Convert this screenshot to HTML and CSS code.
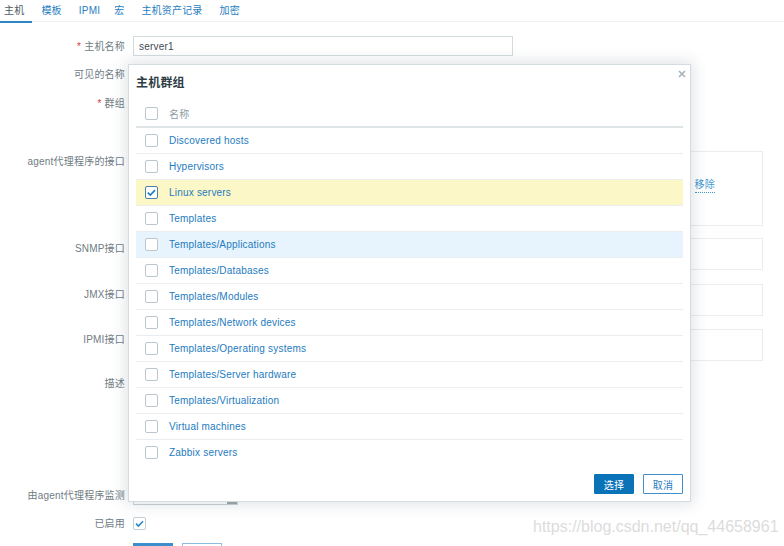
FILE: index.html
```html
<!DOCTYPE html>
<html lang="zh">
<head>
<meta charset="utf-8">
<title>主机</title>
<link rel="stylesheet" href="styles.css">
</head>
<body>
<nav class="tabs">
  <span class="tab active">主机</span>
  <span class="tab">模板</span>
  <span class="tab tab-narrow">IPMI</span>
  <span class="tab">宏</span>
  <span class="tab">主机资产记录</span>
  <span class="tab">加密</span>
</nav>

<form class="form">
  <div class="row r1">
    <label class="lbl"><span class="req">*</span>主机名称</label>
    <div class="input wide">server1</div>
  </div>
  <div class="row r2">
    <label class="lbl">可见的名称</label>
    <div class="input wide"></div>
  </div>
  <div class="row r3">
    <label class="lbl"><span class="req">*</span>群组</label>
    <div class="multi"></div>
  </div>
  <div class="row r4">
    <label class="lbl">agent代理程序的接口</label>
    <div class="ibox agent"><span class="remove">移除</span></div>
  </div>
  <div class="row r5">
    <label class="lbl">SNMP接口</label>
    <div class="ibox small"></div>
  </div>
  <div class="row r6">
    <label class="lbl">JMX接口</label>
    <div class="ibox small"></div>
  </div>
  <div class="row r7">
    <label class="lbl">IPMI接口</label>
    <div class="ibox small"></div>
  </div>
  <div class="row r8">
    <label class="lbl">描述</label>
    <div class="textarea"></div>
  </div>
  <div class="row r9">
    <label class="lbl">由agent代理程序监测</label>
    <div class="select"><span class="arrow"></span></div>
  </div>
  <div class="row r10">
    <label class="lbl">已启用</label>
    <div class="field-cb"><span class="cb cb-light"><svg viewBox="0 0 13 13" width="13" height="13"><polyline points="3,6.6 5.4,9 10,4.2" fill="none" stroke="#2a86c9" stroke-width="1.6"/></svg></span></div>
  </div>
  <div class="row r11">
    <span></span>
    <div class="btns"><span class="fbtn primary"></span><span class="fbtn ghost"></span></div>
  </div>
</form>

<div class="modal">
  <span class="close"><svg viewBox="0 0 8 8" width="8" height="8"><path d="M1 1L7 7M7 1L1 7" stroke="#a7b3b9" stroke-width="1.6" fill="none"/></svg></span>
  <h2 class="mtitle">主机群组</h2>
  <div class="table">
    <div class="trow head"><span class="cell-cb"><span class="cb"></span></span><span class="hname">名称</span></div>
    <div class="trow"><span class="cell-cb"><span class="cb"></span></span><a class="link">Discovered hosts</a></div>
    <div class="trow"><span class="cell-cb"><span class="cb"></span></span><a class="link">Hypervisors</a></div>
    <div class="trow selected"><span class="cell-cb"><span class="cb cb-on"><svg viewBox="0 0 13 13" width="13" height="13"><polyline points="2.8,6.6 5.3,9 10,4.2" fill="none" stroke="#1f7dc4" stroke-width="1.7"/></svg></span></span><a class="link">Linux servers</a></div>
    <div class="trow"><span class="cell-cb"><span class="cb"></span></span><a class="link">Templates</a></div>
    <div class="trow hover"><span class="cell-cb"><span class="cb"></span></span><a class="link">Templates/Applications</a></div>
    <div class="trow"><span class="cell-cb"><span class="cb"></span></span><a class="link">Templates/Databases</a></div>
    <div class="trow"><span class="cell-cb"><span class="cb"></span></span><a class="link">Templates/Modules</a></div>
    <div class="trow"><span class="cell-cb"><span class="cb"></span></span><a class="link">Templates/Network devices</a></div>
    <div class="trow"><span class="cell-cb"><span class="cb"></span></span><a class="link">Templates/Operating systems</a></div>
    <div class="trow"><span class="cell-cb"><span class="cb"></span></span><a class="link">Templates/Server hardware</a></div>
    <div class="trow"><span class="cell-cb"><span class="cb"></span></span><a class="link">Templates/Virtualization</a></div>
    <div class="trow"><span class="cell-cb"><span class="cb"></span></span><a class="link">Virtual machines</a></div>
    <div class="trow last"><span class="cell-cb"><span class="cb"></span></span><a class="link">Zabbix servers</a></div>
  </div>
  <div class="mfoot">
    <button type="button" class="btn btn-primary">选择</button>
    <button type="button" class="btn btn-alt">取消</button>
  </div>
</div>

<div class="watermark">https://blog.csdn.net/qq_44658961</div>
</body>
</html>
```

FILE: styles.css
```css
* { box-sizing: border-box; }

html, body {
  margin: 0;
  padding: 0;
  background: #ffffff;
}

body {
  width: 784px;
  height: 546px;
  overflow: hidden;
  position: relative;
  font-family: "Liberation Sans", Arial, "Noto Sans CJK SC", sans-serif;
  font-size: 10px;
  letter-spacing: 0.2px;
  color: #6f7c84;
}

/* tabs */
.tabs {
  display: flex;
  gap: 5px;
  height: 22px;
  border-bottom: 1px solid #eef1f3;
}
.tab {
  line-height: 21px;
  padding: 0 8px 0 4px;
  color: #1f7dc1;
  border-bottom: 2px solid transparent;
  height: 23px;
}
.tab.tab-narrow { padding-right: 5px; }
.tab.active {
  color: #4d5a62;
  border-bottom-color: #2d86c6;
}

/* form */
.form {
  padding-top: 14px;
}
.row {
  display: grid;
  grid-template-columns: 125px auto;
  column-gap: 8px;
  align-items: start;
}
.lbl {
  text-align: right;
  height: 20px;
  line-height: 20px;
  padding-top: 1px;
  white-space: nowrap;
  color: #6f7c84;
}
.req {
  color: #d83a3a;
  margin-right: 3px;
}
.r1 { margin-bottom: 8px; }
.r2 { margin-bottom: 9px; }
.r3 { margin-bottom: 8px; }
.r4 { margin-bottom: 12px; }
.r5 { margin-bottom: 14px; }
.r6 { margin-bottom: 13px; }
.r7 { margin-bottom: 12px; }
.r8 { margin-bottom: 8px; }
.r9 { margin-bottom: 8px; }
.r10 { margin-bottom: 10px; }

.input {
  height: 20px;
  border: 1px solid #d3dbdf;
  line-height: 18px;
  padding: 1px 5px 0;
  color: #3e4b53;
}
.input.wide { width: 380px; }
.multi { width: 380px; height: 50px; }
.ibox {
  width: 630px;
  border: 1px solid #e9edef;
  background: #ffffff;
}
.ibox.agent {
  height: 75px;
  display: flex;
  justify-content: flex-end;
  align-items: flex-start;
  padding: 26px 47px 0 0;
}
.ibox.small { height: 32px; }
.remove {
  color: #3f97d2;
  line-height: 14px;
  border-bottom: 1px dotted #3f97d2;
}
.textarea {
  width: 480px;
  height: 104px;
  border: 1px solid #d3dbdf;
}
.select {
  width: 105px;
  height: 20px;
  border: 1px solid #d3dbdf;
  border-bottom-color: #c9d1d5;
  display: flex;
  justify-content: flex-end;
  align-items: flex-end;
}
.arrow {
  width: 10px;
  height: 2px;
  background: #9ea8ad;
}
.field-cb {
  height: 20px;
  display: flex;
  align-items: center;
}
.btns {
  display: flex;
  gap: 9px;
}
.fbtn {
  width: 40px;
  height: 20px;
}
.fbtn.primary { background: #3d8fcb; }
.fbtn.ghost { border: 1px solid #8cbde0; }

/* checkbox */
.cb {
  display: inline-block;
  width: 13px;
  height: 13px;
  border: 1px solid #bcc7cd;
  border-radius: 2px;
  background: #ffffff;
  position: relative;
}
.cb svg {
  position: absolute;
  left: -1px;
  top: -1px;
}
.cb-on { border-color: #4f7fa6; }
.cb-light { border-color: #c3ced4; }

/* modal */
.modal {
  position: absolute;
  left: 128px;
  top: 64px;
  width: 563px;
  height: 438px;
  background: #ffffff;
  border: 1px solid #d5dce0;
  box-shadow: 0 0 14px 2px rgba(50, 70, 90, 0.16);
  padding: 0 7px;
}
.close {
  position: absolute;
  right: 4px;
  top: 5px;
  width: 8px;
  height: 8px;
  display: block;
  line-height: 0;
}
.mtitle {
  margin: 0 0 7px 0;
  padding: 8px 0 0 0;
  font-size: 12px;
  line-height: 20px;
  font-weight: bold;
  color: #2f3d45;
}
.table {
  display: flex;
  flex-direction: column;
}
.trow {
  display: flex;
  align-items: center;
  height: 26px;
  border-bottom: 1px solid #ebeef0;
}
.trow.head {
  height: 28px;
  border-bottom: 2px solid #dfe4e7;
}
.trow.last { border-bottom: none; height: 25px; }
.trow.selected { background: #fcf7c6; }
.trow.hover { background: #e8f4fd; }
.cell-cb {
  width: 33px;
  padding-left: 9px;
  display: flex;
  align-items: center;
}
.hname { color: #8e9ca4; }
.link {
  color: #1d7bc0;
  text-decoration: none;
}
.mfoot {
  display: flex;
  justify-content: flex-end;
  gap: 9px;
  margin-top: 9px;
}
.btn {
  width: 40px;
  height: 20px;
  font-family: inherit;
  font-size: 10px;
  letter-spacing: 0.2px;
  padding: 0;
  border-radius: 1px;
  cursor: pointer;
}
.btn-primary {
  background: #0a73b8;
  color: #ffffff;
  border: 1px solid #0a73b8;
}
.btn-alt {
  background: #ffffff;
  color: #1f7cc0;
  border: 1px solid #3f8fca;
}

.watermark {
  position: absolute;
  left: 533px;
  top: 519px;
  font-size: 16px;
  line-height: 16px;
  letter-spacing: 0;
  color: #dcdcdc;
  white-space: nowrap;
}
```
